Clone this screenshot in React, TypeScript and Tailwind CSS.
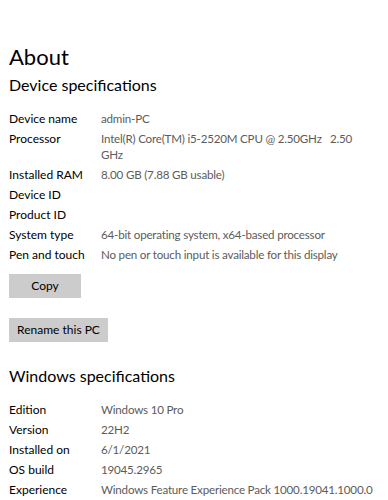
import React from "react";

const device: [string, string][] = [
  ["Device name", "admin-PC"],
  ["Processor", "Intel(R) Core(TM) i5-2520M CPU @ 2.50GHz\u00a0\u00a0\u00a02.50\nGHz"],
  ["Installed RAM", "8.00 GB (7.88 GB usable)"],
  ["Device ID", ""],
  ["Product ID", ""],
  ["System type", "64-bit operating system, x64-based processor"],
  ["Pen and touch", "No pen or touch input is available for this display"],
];

const windows: [string, string][] = [
  ["Edition", "Windows 10 Pro"],
  ["Version", "22H2"],
  ["Installed on", "6/1/2021"],
  ["OS build", "19045.2965"],
  ["Experience", "Windows Feature Experience Pack 1000.19041.1000.0"],
];

const SpecRow = ({ label, value }: { label: string; value: string }) => (
  <div className="flex text-[12px] leading-[16px]">
    <div className="w-[92px] shrink-0 text-black">{label}</div>
    <div className="flex-1 whitespace-pre text-[11.6px] tracking-[-0.2px] text-[#5c5c5c]">
      {value}
    </div>
  </div>
);

const App: React.FC = () => {
  return (
    <div
      className="w-[388px] h-[500px] overflow-hidden bg-white pl-[9px] pt-[43px]"
      style={{ fontFamily: 'Lato, "Noto Sans", sans-serif' }}
    >
      <h1 className="text-[22px] leading-[28px] text-black">About</h1>
      <h2 className="text-[16px] leading-[22px] text-black mt-[3px]">
        Device specifications
      </h2>

      <div className="mt-[15px] flex flex-col gap-[4px]">
        {device.map(([l, v]) => (
          <SpecRow key={l} label={l} value={v} />
        ))}
      </div>

      <button className="mt-[11px] block w-[72px] h-[24px] bg-[#cccccc] text-[12px] text-black">
        Copy
      </button>
      <button className="mt-[20px] block w-[99px] h-[24px] bg-[#cccccc] text-[12px] text-black">
        Rename this PC
      </button>

      <h2 className="mt-[23px] text-[16px] leading-[22px] text-black">
        Windows specifications
      </h2>

      <div className="mt-[15px] flex flex-col gap-[4px]">
        {windows.map(([l, v]) => (
          <SpecRow key={l} label={l} value={v} />
        ))}
      </div>
    </div>
  );
};

export default App;
